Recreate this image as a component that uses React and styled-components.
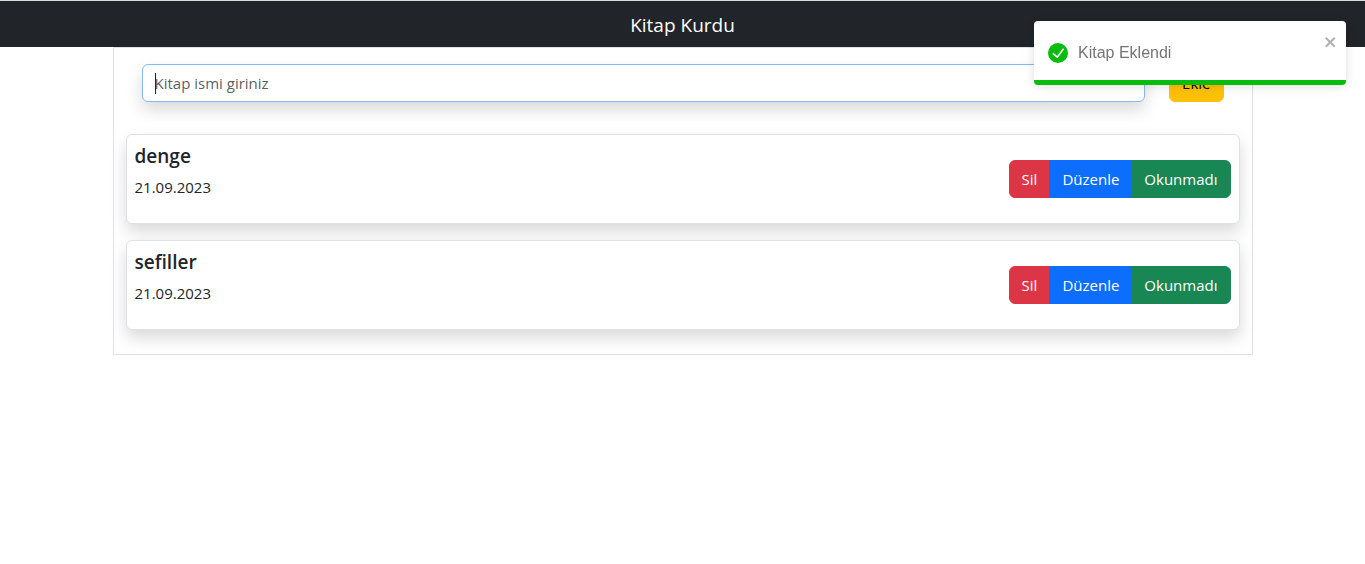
import React, { useState } from "react";
import styled, { createGlobalStyle } from "styled-components";

const GlobalStyle = createGlobalStyle`
  *, *::before, *::after { box-sizing: border-box; }
  body {
    margin: 0;
    background: #fff;
    color: #212529;
    font-family: "Segoe UI", "Open Sans", "Noto Sans", sans-serif;
    font-size: 15px;
    line-height: 24px;
  }
`;

const Header = styled.header`
  border-top: 1px solid #d5dedc;
  background: #212529;
  color: #fff;
  padding: 8px 16px 6px;
`;

const Brand = styled.h1`
  margin: 0;
  font-size: 19px;
  font-weight: 400;
  line-height: 32px;
  text-align: center;
`;

const Container = styled.main`
  max-width: 1140px;
  margin: 0 auto;
  padding: 0 12px 8px;
  border: 1px solid #dee2e6;
`;

const Form = styled.form`
  display: flex;
  gap: 24px;
  padding: 16px;
`;

const Field = styled.div`
  position: relative;
  flex: 1;
  min-width: 0;
`;

const Caret = styled.span`
  position: absolute;
  top: 9px;
  left: 13px;
  width: 1px;
  height: 21px;
  background: #212529;
  pointer-events: none;
`;

const TextField = styled.input`
  display: block;
  width: 100%;
  height: 38px;
  padding: 6px 12px;
  border: 1px solid #86b7fe;
  border-radius: 6px;
  outline: 0;
  background: #fff;
  color: #212529;
  font: inherit;
  box-shadow: 0 8px 16px rgba(0, 0, 0, 0.15);

  &::placeholder {
    color: rgba(33, 37, 41, 0.75);
    opacity: 1;
  }
`;

const tones = {
  danger: ["#dc3545", "#fff"],
  primary: ["#0d6efd", "#fff"],
  success: ["#198754", "#fff"],
  warning: ["#ffc107", "#000"],
};

const Button = styled.button`
  height: 38px;
  padding: 6px 12px;
  border: 1px solid ${(p) => tones[p.$tone][0]};
  border-radius: 6px;
  background: ${(p) => tones[p.$tone][0]};
  color: ${(p) => tones[p.$tone][1]};
  font: inherit;
  white-space: nowrap;
  cursor: pointer;
`;

const BookList = styled.ul`
  margin: 0;
  padding: 0;
  list-style: none;
`;

const BookCard = styled.li`
  display: flex;
  align-items: center;
  justify-content: space-between;
  margin: 16px 0;
  padding: 8px;
  border: 1px solid #dee2e6;
  border-radius: 6px;
  background: #fff;
  box-shadow: 0 8px 16px rgba(0, 0, 0, 0.15);
`;

const BookTitle = styled.h2`
  margin: 0 0 6px;
  font-size: 19px;
  font-weight: 600;
  line-height: 26px;
`;

const BookDate = styled.p`
  margin: 0 0 16px;
`;

const ButtonGroup = styled.div`
  display: inline-flex;

  ${Button}:not(:first-child) {
    margin-left: -1px;
    border-top-left-radius: 0;
    border-bottom-left-radius: 0;
  }

  ${Button}:not(:last-child) {
    border-top-right-radius: 0;
    border-bottom-right-radius: 0;
  }
`;

const Toast = styled.div`
  position: fixed;
  top: 21px;
  right: 19px;
  width: 312px;
  height: 64px;
  display: flex;
  align-items: center;
  gap: 10px;
  padding: 8px 8px 8px 14px;
  border-radius: 4px;
  overflow: hidden;
  background: #fff;
  color: #757575;
  font-family: "Liberation Sans", Arial, sans-serif;
  font-size: 16px;
  box-shadow: 0 1px 10px rgba(0, 0, 0, 0.1), 0 2px 15px rgba(0, 0, 0, 0.05);
`;

const ToastText = styled.span`
  flex: 1;
`;

const CloseButton = styled.button`
  align-self: flex-start;
  display: flex;
  margin: 0;
  padding: 5px 0;
  border: 0;
  background: transparent;
  color: #000;
  opacity: 0.3;
  cursor: pointer;
`;

const ToastProgress = styled.div`
  position: absolute;
  left: 0;
  right: 0;
  bottom: 0;
  height: 5px;
  background: #07bc0c;
`;

const SuccessIcon = () => (
  <svg width="20" height="20" viewBox="0 0 24 24" fill="#07bc0c" aria-hidden="true">
    <path d="M12 0a12 12 0 1012 12A12.014 12.014 0 0012 0zm6.927 8.2l-6.845 9.289a1.011 1.011 0 01-1.43.188l-4.888-3.908a1 1 0 111.25-1.562l4.076 3.261 6.227-8.451a1 1 0 111.61 1.183z" />
  </svg>
);

const CloseIcon = () => (
  <svg width="14" height="16" viewBox="0 0 14 16" fill="currentColor" aria-hidden="true">
    <path
      fillRule="evenodd"
      d="M7.71 8.23l3.75 3.75-1.48 1.48-3.75-3.75-3.75 3.75L1 11.98l3.75-3.75L1 4.48 2.48 3l3.75 3.75L9.98 3l1.48 1.48-3.75 3.75z"
    />
  </svg>
);

const books = [
  { id: 1, title: "denge", date: "21.09.2023" },
  { id: 2, title: "sefiller", date: "21.09.2023" },
];

export default function App() {
  const [name, setName] = useState("");
  const [toastOpen, setToastOpen] = useState(true);

  return (
    <>
      <GlobalStyle />
      <Header>
        <Brand>Kitap Kurdu</Brand>
      </Header>
      <Container>
        <Form onSubmit={(e) => e.preventDefault()}>
          <Field>
            <TextField
              type="text"
              autoFocus
              aria-label="Kitap ismi"
              placeholder="Kitap ismi giriniz"
              value={name}
              onChange={(e) => setName(e.target.value)}
            />
            {name === "" && <Caret aria-hidden="true" />}
          </Field>
          <Button type="submit" $tone="warning">Ekle</Button>
        </Form>
        <BookList>
          {books.map((book) => (
            <BookCard key={book.id}>
              <div>
                <BookTitle>{book.title}</BookTitle>
                <BookDate>{book.date}</BookDate>
              </div>
              <ButtonGroup role="group">
                <Button type="button" $tone="danger">Sil</Button>
                <Button type="button" $tone="primary">Düzenle</Button>
                <Button type="button" $tone="success">Okunmadı</Button>
              </ButtonGroup>
            </BookCard>
          ))}
        </BookList>
      </Container>
      {toastOpen && (
        <Toast role="alert">
          <SuccessIcon />
          <ToastText>Kitap Eklendi</ToastText>
          <CloseButton type="button" aria-label="close" onClick={() => setToastOpen(false)}>
            <CloseIcon />
          </CloseButton>
          <ToastProgress />
        </Toast>
      )}
    </>
  );
}
